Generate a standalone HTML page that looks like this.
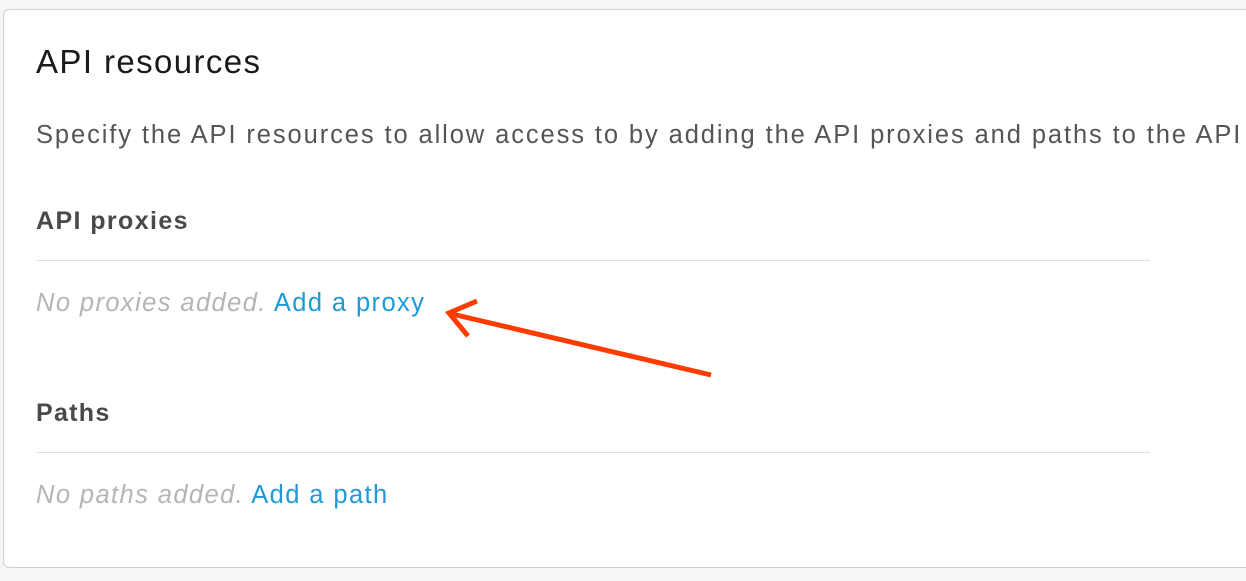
<!DOCTYPE html>
<html><head><style>
body{margin:0;width:1246px;height:581px;background:#f5f6f6;overflow:hidden;font-family:"Liberation Sans",sans-serif;position:relative}
.card{position:absolute;left:3px;top:9px;width:1260px;height:557px;background:#fff;border:1.5px solid #cfcfcf;border-radius:6px}
.t{position:absolute;white-space:nowrap}
.hr{position:absolute;left:36px;width:1114px;height:1px;background:#e2e2e2}
</style></head><body>
<div class="card"></div>
<div class="t" style="left:36px;top:43px;font-size:33px;color:#1a1a1a;letter-spacing:1.4px">API resources</div>
<div class="t" style="left:36px;top:121px;font-size:25.5px;color:#555;letter-spacing:1.9px">Specify the API resources to allow access to by adding the API proxies and paths to the API</div>
<div class="t" style="left:36px;top:207px;font-size:25px;color:#4a4a4a;font-weight:bold;letter-spacing:1.4px">API proxies</div>
<div class="hr" style="top:260px"></div>
<div class="t" style="left:36px;top:289px;font-size:25.5px;letter-spacing:1.4px"><i style="color:#b5b5b5">No proxies added.</i> <span style="color:#1f9ad6">Add a proxy</span></div>
<div class="t" style="left:36px;top:399px;font-size:25px;color:#4a4a4a;font-weight:bold;letter-spacing:1.3px">Paths</div>
<div class="hr" style="top:452px"></div>
<div class="t" style="left:36px;top:481px;font-size:25.5px;letter-spacing:1.4px"><i style="color:#b5b5b5">No paths added.</i> <span style="color:#1f9ad6">Add a path</span></div>
<svg style="position:absolute;left:0;top:0" width="1246" height="581">
<g stroke="#ff3c00" stroke-width="5" stroke-linecap="butt" fill="none">
<line x1="711" y1="375" x2="452" y2="314"/>
<polyline points="477,301 449,313 468,336"/>
</g>
</svg>
</body></html>
